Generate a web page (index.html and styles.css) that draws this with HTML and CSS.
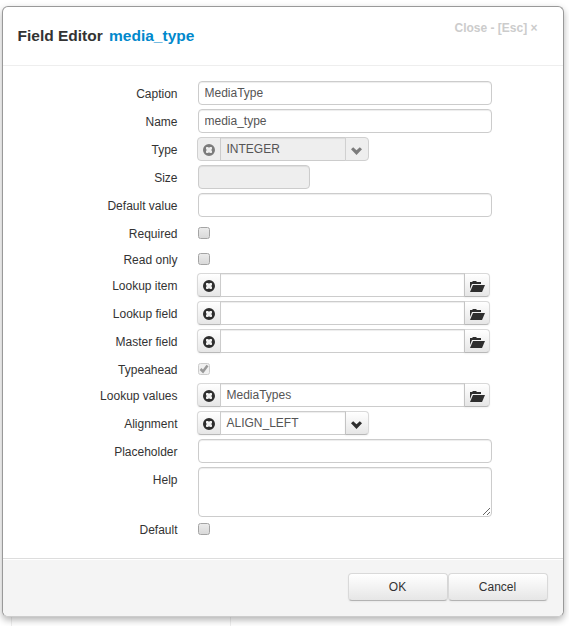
FILE: index.html
```html
<!DOCTYPE html>
<html lang="en">
<head>
<meta charset="utf-8">
<title>Field Editor</title>
<link rel="stylesheet" href="styles.css">
</head>
<body>
<svg class="defs" width="0" height="0">
  <symbol id="remove" viewBox="0 0 14 14"><path fill-rule="evenodd" d="M7 1a6 6 0 1 0 0 12A6 6 0 0 0 7 1zM4 4.500 4.500 4h1.500l1 .8 1-.8h1.500l.5.5V6l-.8 1 .8 1v1.500l-.5.5H8l-1-.8-1 .8H4.500L4 9.500V8l.8-1L4 6z"/></symbol>
  <symbol id="chevron" viewBox="0 0 12 8"><path d="M0 2.300 2.200.2 5.500 3.200 8.800.2 11 2.300 5.500 7.900z"/></symbol>
  <symbol id="folder" viewBox="0 0 16 12"><path d="M1 1h2l1-1h3l1 1h4v2H3L1 8z"/><path d="M4 4H16L13 11H1z"/></symbol>
</svg>
<div class="modal">
  <div class="header">
    <h3>Field Editor <span>media_type</span></h3>
    <a class="close">Close - [Esc] ×</a>
  </div>
  <form class="body">
    <div class="row"><label>Caption</label><input class="text" type="text" value="MediaType"></div>
    <div class="row"><label>Name</label><input class="text" type="text" value="media_type"></div>
    <div class="row"><label>Type</label><div class="group select disabled"><span class="btn"><svg class="i-remove"><use href="#remove"/></svg></span><span class="value">INTEGER</span><span class="btn"><svg class="i-chevron"><use href="#chevron"/></svg></span></div></div>
    <div class="row"><label>Size</label><input class="text small" type="text" disabled></div>
    <div class="row"><label>Default value</label><input class="text" type="text"></div>
    <div class="row check"><label>Required</label><span class="box"></span></div>
    <div class="row check"><label>Read only</label><span class="box"></span></div>
    <div class="row"><label>Lookup item</label><div class="group"><span class="btn"><svg class="i-remove"><use href="#remove"/></svg></span><span class="value"></span><span class="btn wide"><svg class="i-folder"><use href="#folder"/></svg></span></div></div>
    <div class="row"><label>Lookup field</label><div class="group"><span class="btn"><svg class="i-remove"><use href="#remove"/></svg></span><span class="value"></span><span class="btn wide"><svg class="i-folder"><use href="#folder"/></svg></span></div></div>
    <div class="row"><label>Master field</label><div class="group"><span class="btn"><svg class="i-remove"><use href="#remove"/></svg></span><span class="value"></span><span class="btn wide"><svg class="i-folder"><use href="#folder"/></svg></span></div></div>
    <div class="row check"><label>Typeahead</label><span class="box off"><svg viewBox="0 0 10 10"><path d="M1.500 5 4 7.500 8.500 1.500" fill="none" stroke="#999" stroke-width="2.500"/></svg></span></div>
    <div class="row"><label>Lookup values</label><div class="group"><span class="btn"><svg class="i-remove"><use href="#remove"/></svg></span><span class="value">MediaTypes</span><span class="btn wide"><svg class="i-folder"><use href="#folder"/></svg></span></div></div>
    <div class="row"><label>Alignment</label><div class="group select"><span class="btn"><svg class="i-remove"><use href="#remove"/></svg></span><span class="value">ALIGN_LEFT</span><span class="btn"><svg class="i-chevron"><use href="#chevron"/></svg></span></div></div>
    <div class="row"><label>Placeholder</label><input class="text" type="text"></div>
    <div class="row help"><label>Help</label><textarea class="text"></textarea></div>
    <div class="row check"><label>Default</label><span class="box"></span></div>
  </form>
  <div class="footer"><button>OK</button><button>Cancel</button></div>
</div>
<div class="page-grid"></div>
</body>
</html>
```
FILE: styles.css
```css
* { box-sizing: border-box; }
html, body { height: 100%; }
body {
  margin: 0;
  padding: 6px 0 0 2px;
  overflow: hidden;
  background: #fff;
  color: #333;
  font: 12px/18px "Liberation Sans", Arial, sans-serif;
}
.defs { position: absolute; }
.modal {
  position: relative;
  display: flex;
  flex-direction: column;
  width: 562px;
  height: 611px;
  background: #fff;
  border: 1px solid #999;
  border-bottom-color: #ccc;
  border-radius: 6px;
  box-shadow: 0 3px 7px rgba(0, 0, 0, .3);
}
.page-grid {
  width: 220px;
  height: 9px;
  margin-left: 9px;
  border: solid #eee;
  border-width: 0 1px;
}
.header {
  display: flex;
  justify-content: space-between;
  height: 59px;
  padding: 12px 25.5px 0 14.5px;
  border-bottom: 1px solid #eee;
}
h3 { margin: 7px 0 0; font-size: 15.5px; line-height: 20px; }
h3 span { margin-left: 2px; color: #08c; }
.close { font-weight: bold; color: #ccc; }
.body { flex: 1; margin: 0; padding-top: 15px; }
.row { display: flex; height: 28px; }
.row label { width: 174.5px; margin-right: 20.5px; padding-top: 4px; text-align: right; }
.text {
  width: 294px;
  height: 24px;
  margin: 0;
  padding: 1px 5.5px 2px;
  border: 1px solid #ccc;
  border-radius: 4px;
  background: #fff;
  box-shadow: inset 0 1px 1px rgba(0, 0, 0, .075);
  color: #555;
  font: inherit;
}
.small { width: 112px; background: #eee; }
.help { height: 50px; }
textarea.text { height: 50px; resize: both; }
.check { height: 26px; }
.box {
  width: 12px;
  height: 12px;
  margin-top: 6px;
  border: 1px solid #a4a4a4;
  border-radius: 2.5px;
  background: linear-gradient(#ebebeb, #d9d9d9);
}
.box.off { border-color: #ccc; background: #f0f0f0; }
.box svg { display: block; width: 10px; height: 10px; }
.group { display: flex; width: 293px; height: 24px; margin-left: -1px; }
.group.select { width: 172px; }
.btn {
  display: flex;
  align-items: center;
  justify-content: center;
  width: 24px;
  border: 1px solid #d9d9d9;
  border-right-color: #c4c4c4;
  border-bottom-color: #b8b8b8;
  border-radius: 4px 0 0 4px;
  background: linear-gradient(#fff, #e6e6e6);
  box-shadow: 0 1px 2px rgba(0, 0, 0, .05);
  fill: #2e2e2e;
}
.btn:last-child { border-radius: 0 4px 4px 0; border-color: #d9d9d9 #d9d9d9 #b8b8b8 #c4c4c4; }
.btn.wide { width: 26px; }
.value {
  flex: 1;
  margin: 0 -1px;
  padding: 2px 5.5px;
  border: 1px solid #ccc;
  background: #fff;
  box-shadow: inset 0 1px 1px rgba(0, 0, 0, .075);
  color: #555;
}
.disabled .value { background: #eee; }
.disabled .btn { background: #eee; border-color: #d0d0d0; fill: #7c7c7c; box-shadow: none; }
.i-remove { width: 14px; height: 14px; margin-top: 2px; }
.i-chevron { width: 12px; height: 8px; margin-top: 4px; }
.i-folder { width: 16px; height: 12px; margin-top: 4px; }
.footer {
  display: flex;
  justify-content: flex-end;
  height: 58px;
  padding: 14px 15px 0;
  border-top: 1px solid #ddd;
  border-radius: 0 0 6px 6px;
  background: #f4f4f4;
  box-shadow: inset 0 1px 0 #fff;
}
button {
  width: 100px;
  height: 28px;
  padding: 0 1px 0 0;
  border: 1px solid #d9d9d9;
  border-bottom-color: #b3b3b3;
  border-radius: 4px;
  background: linear-gradient(#fff, #e6e6e6);
  box-shadow: inset 0 1px 0 rgba(255, 255, 255, .2), 0 1px 2px rgba(0, 0, 0, .05);
  color: #333;
  font: inherit;
}
```
